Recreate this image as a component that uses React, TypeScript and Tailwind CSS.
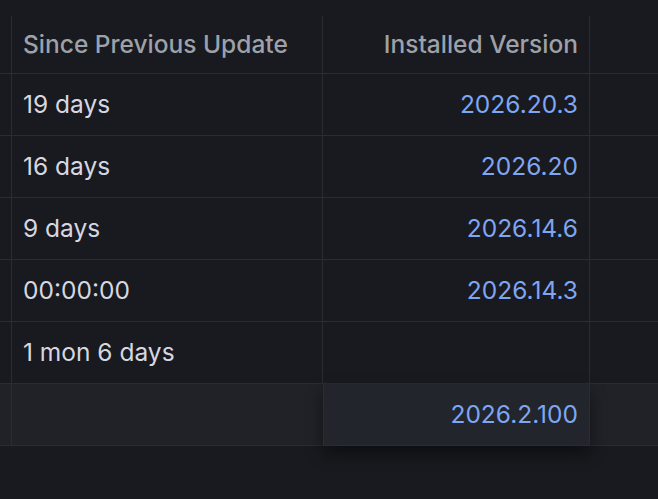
const rows = [
  { since: '19 days', version: '2026.20.3' },
  { since: '16 days', version: '2026.20' },
  { since: '9 days', version: '2026.14.6' },
  { since: '00:00:00', version: '2026.14.3' },
  { since: '1 mon 6 days', version: '' },
]

function Row({ since, version }: { since: string; version: string }) {
  return (
    <div className="flex h-[62px]">
      <div className="w-[12px] shrink-0 border-r border-b border-[#2a2c31]" />
      <div className="w-[311px] shrink-0 flex items-center pl-[11px] border-r border-b border-[#2a2c31] text-[#d6d7e0]">
        {since}
      </div>
      <div className="w-[267px] shrink-0 flex items-center justify-end pr-[11px] border-r border-b border-[#2a2c31] text-[#7ea6f2]">
        {version}
      </div>
      <div className="flex-1 border-b border-[#2a2c31]" />
    </div>
  )
}

export default function App() {
  return (
    <div
      className="w-[658px] h-[499px] overflow-hidden bg-[#181a1f] pt-[16px] text-[24.5px]"
      style={{ fontFamily: 'Inter, "Noto Sans", sans-serif' }}
    >
      <div className="flex h-[58px] text-[#9ea1a9] font-medium">
        <div className="w-[12px] shrink-0 border-r border-b border-[#2a2c31]" />
        <div className="w-[311px] shrink-0 flex items-center pl-[11px] border-r border-b border-[#2a2c31]">
          Since Previous Update
        </div>
        <div className="w-[267px] shrink-0 flex items-center justify-end pr-[11px] border-r border-b border-[#2a2c31]">
          Installed Version
        </div>
        <div className="flex-1 border-b border-[#2a2c31]" />
      </div>
      {rows.map((r) => (
        <Row key={r.since} since={r.since} version={r.version} />
      ))}
      <div className="flex h-[62px] bg-[#202227]">
        <div className="w-[12px] shrink-0 border-r border-b border-[#2a2c31]" />
        <div className="w-[311px] shrink-0 border-b border-[#2a2c31]" />
        <div className="relative z-10 w-[267px] shrink-0 flex items-center justify-end pr-[11px] border-x border-b border-[#2a2c31] bg-[#22252b] text-[#7ea6f2] shadow-[0_8px_16px_rgba(0,0,0,0.45)]">
          2026.2.100
        </div>
        <div className="flex-1 border-b border-[#2a2c31]" />
      </div>
    </div>
  )
}
